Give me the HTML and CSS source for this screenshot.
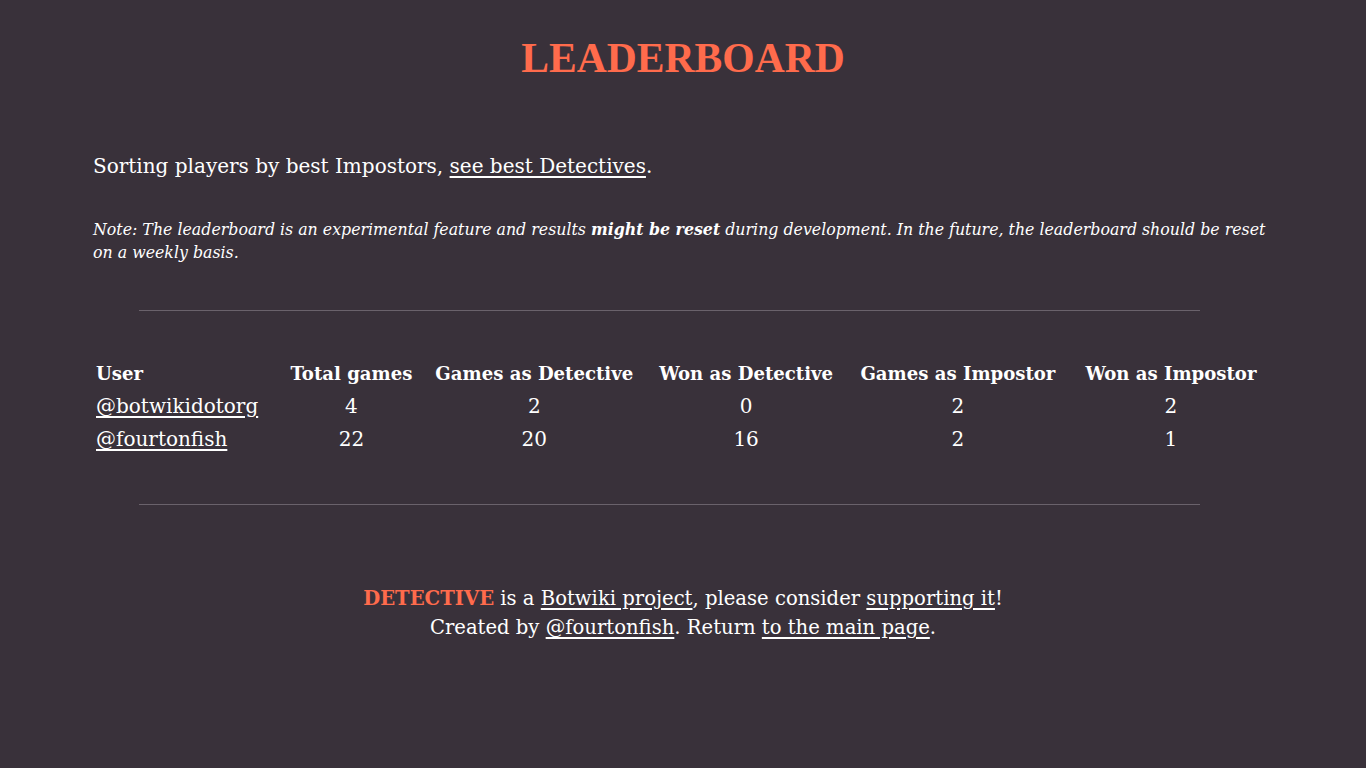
FILE: index.html
```html
<!DOCTYPE html>
<html lang="en">
<head>
<meta charset="utf-8">
<title>Leaderboard - DETECTIVE</title>
<link rel="stylesheet" href="styles.css">
</head>
<body>
<main class="page">
  <h1 class="title">LEADERBOARD</h1>
  <p class="intro">Sorting players by best Impostors, <a href="#">see best Detectives</a>.</p>
  <p class="note"><em>Note: The leaderboard is an experimental feature and results <strong>might be reset</strong> during development. In the future, the leaderboard should be reset on a weekly basis.</em></p>
  <hr class="rule rule-top">
  <table class="board">
    <colgroup>
      <col class="c-user"><col class="c-total"><col class="c-gd"><col class="c-wd"><col class="c-gi"><col class="c-wi">
    </colgroup>
    <thead>
      <tr>
        <th class="user">User</th>
        <th>Total games</th>
        <th>Games as Detective</th>
        <th>Won as Detective</th>
        <th>Games as Impostor</th>
        <th>Won as Impostor</th>
      </tr>
    </thead>
    <tbody>
      <tr>
        <td class="user"><a href="#">@botwikidotorg</a></td>
        <td>4</td><td>2</td><td>0</td><td>2</td><td>2</td>
      </tr>
      <tr>
        <td class="user"><a href="#">@fourtonfish</a></td>
        <td>22</td><td>20</td><td>16</td><td>2</td><td>1</td>
      </tr>
    </tbody>
  </table>
  <hr class="rule rule-bottom">
  <footer class="footer">
    <p><strong class="brand">DETECTIVE</strong> is a <a href="#">Botwiki project</a>, please consider <a href="#">supporting it</a>!<br>
    Created by <a href="#">@fourtonfish</a>. Return <a href="#">to the main page</a>.</p>
  </footer>
</main>
</body>
</html>
```
FILE: styles.css
```css
html, body {
  margin: 0;
  padding: 0;
}
body {
  background: #39313a;
  color: #ffffff;
  font-family: "DejaVu Serif", "Liberation Serif", serif;
  font-size: 20px;
  min-height: 768px;
}
a {
  color: #ffffff;
  text-decoration: underline;
  text-decoration-thickness: 1.5px;
  text-underline-offset: 3px;
}
.page {
  width: 1180px;
  margin: 0 auto;
  padding-top: 31px;
}
.title {
  margin: 0;
  text-align: center;
  color: #ff6b4c;
  font-family: "Liberation Serif", serif;
  font-size: 41.6px;
  line-height: 54px;
  font-weight: bold;
}
.intro {
  margin: 66px 0 0;
  line-height: 30px;
}
.note {
  margin: 37px 0 0;
  font-size: 15.8px;
  line-height: 23px;
}
.note strong {
  font-weight: bold;
}
.rule {
  width: 1061px;
  margin: 0 0 0 46px;
  border: 0;
  border-top: 1px solid #6a626b;
  height: 0;
}
.rule-top {
  margin-top: 46px;
}
.board {
  width: 100%;
  border-collapse: collapse;
  margin-top: 46px;
}
.c-user { width: 15.8%; }
.c-total { width: 12.2%; }
.c-gd { width: 18.8%; }
.c-wd { width: 17.1%; }
.c-gi { width: 18.8%; }
.c-wi { width: 17.3%; }
.board th, .board td {
  padding: 0 3px;
  height: 33px;
  line-height: 33px;
  text-align: center;
  white-space: nowrap;
  font-size: 20px;
}
.board th {
  font-weight: bold;
  font-size: 18.1px;
}
.board .user {
  text-align: left;
}
.rule-bottom {
  margin-top: 48px;
}
.footer {
  margin-top: 79px;
  text-align: center;
}
.footer p {
  margin: 0;
  font-size: 19.6px;
  line-height: 29px;
}
.brand {
  color: #ff6b4c;
  font-weight: bold;
}
```
